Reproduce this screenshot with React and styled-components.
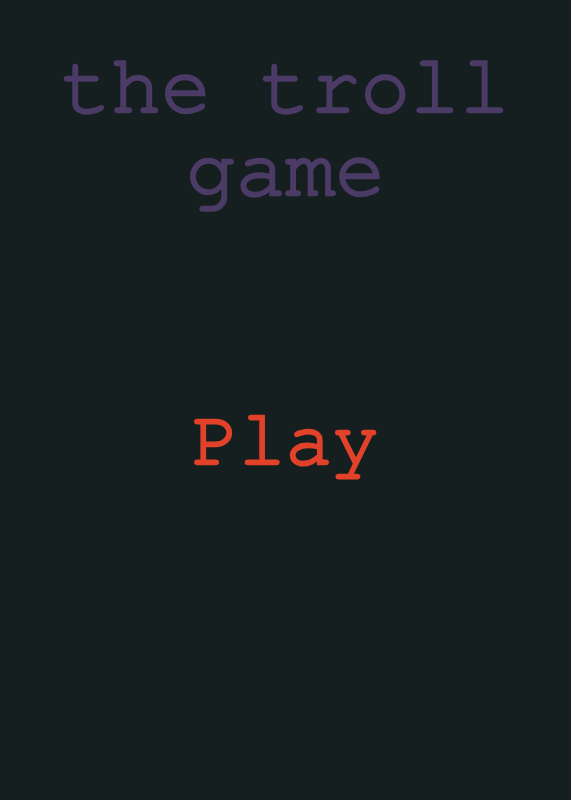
import styled, { createGlobalStyle } from "styled-components"

const GlobalStyle = createGlobalStyle`
  html, body {
    margin: 0;
    padding: 0;
    background-color: #151f1f;
  }
  #root {
    min-height: 100vh;
  }
`

const Screen = styled.main`
  display: flex;
  flex-direction: column;
  align-items: center;
  min-height: 100vh;
  padding-top: 46px;
  box-sizing: border-box;
  font-family: "Nimbus Mono PS", "Nimbus Mono L", "FreeMono", "Courier", "Liberation Mono", monospace;
`

const Title = styled.h1`
  margin: 0;
  width: 100%;
  text-align: center;
  font-size: 83px;
  line-height: 83px;
  font-weight: normal;
  color: #4b3b66;
  -webkit-text-stroke: 2.5px #4b3b66;
`

const PlayButton = styled.button`
  margin-top: 188px;
  padding: 0;
  border: none;
  background: none;
  cursor: pointer;
  font-family: inherit;
  font-size: 78px;
  line-height: 83px;
  color: #e2412a;
  -webkit-text-stroke: 2.5px #e2412a;
`

function App() {
  return (
    <>
      <GlobalStyle />
      <Screen>
        <Title>the troll game</Title>
        <PlayButton>Play</PlayButton>
      </Screen>
    </>
  )
}

export default App
